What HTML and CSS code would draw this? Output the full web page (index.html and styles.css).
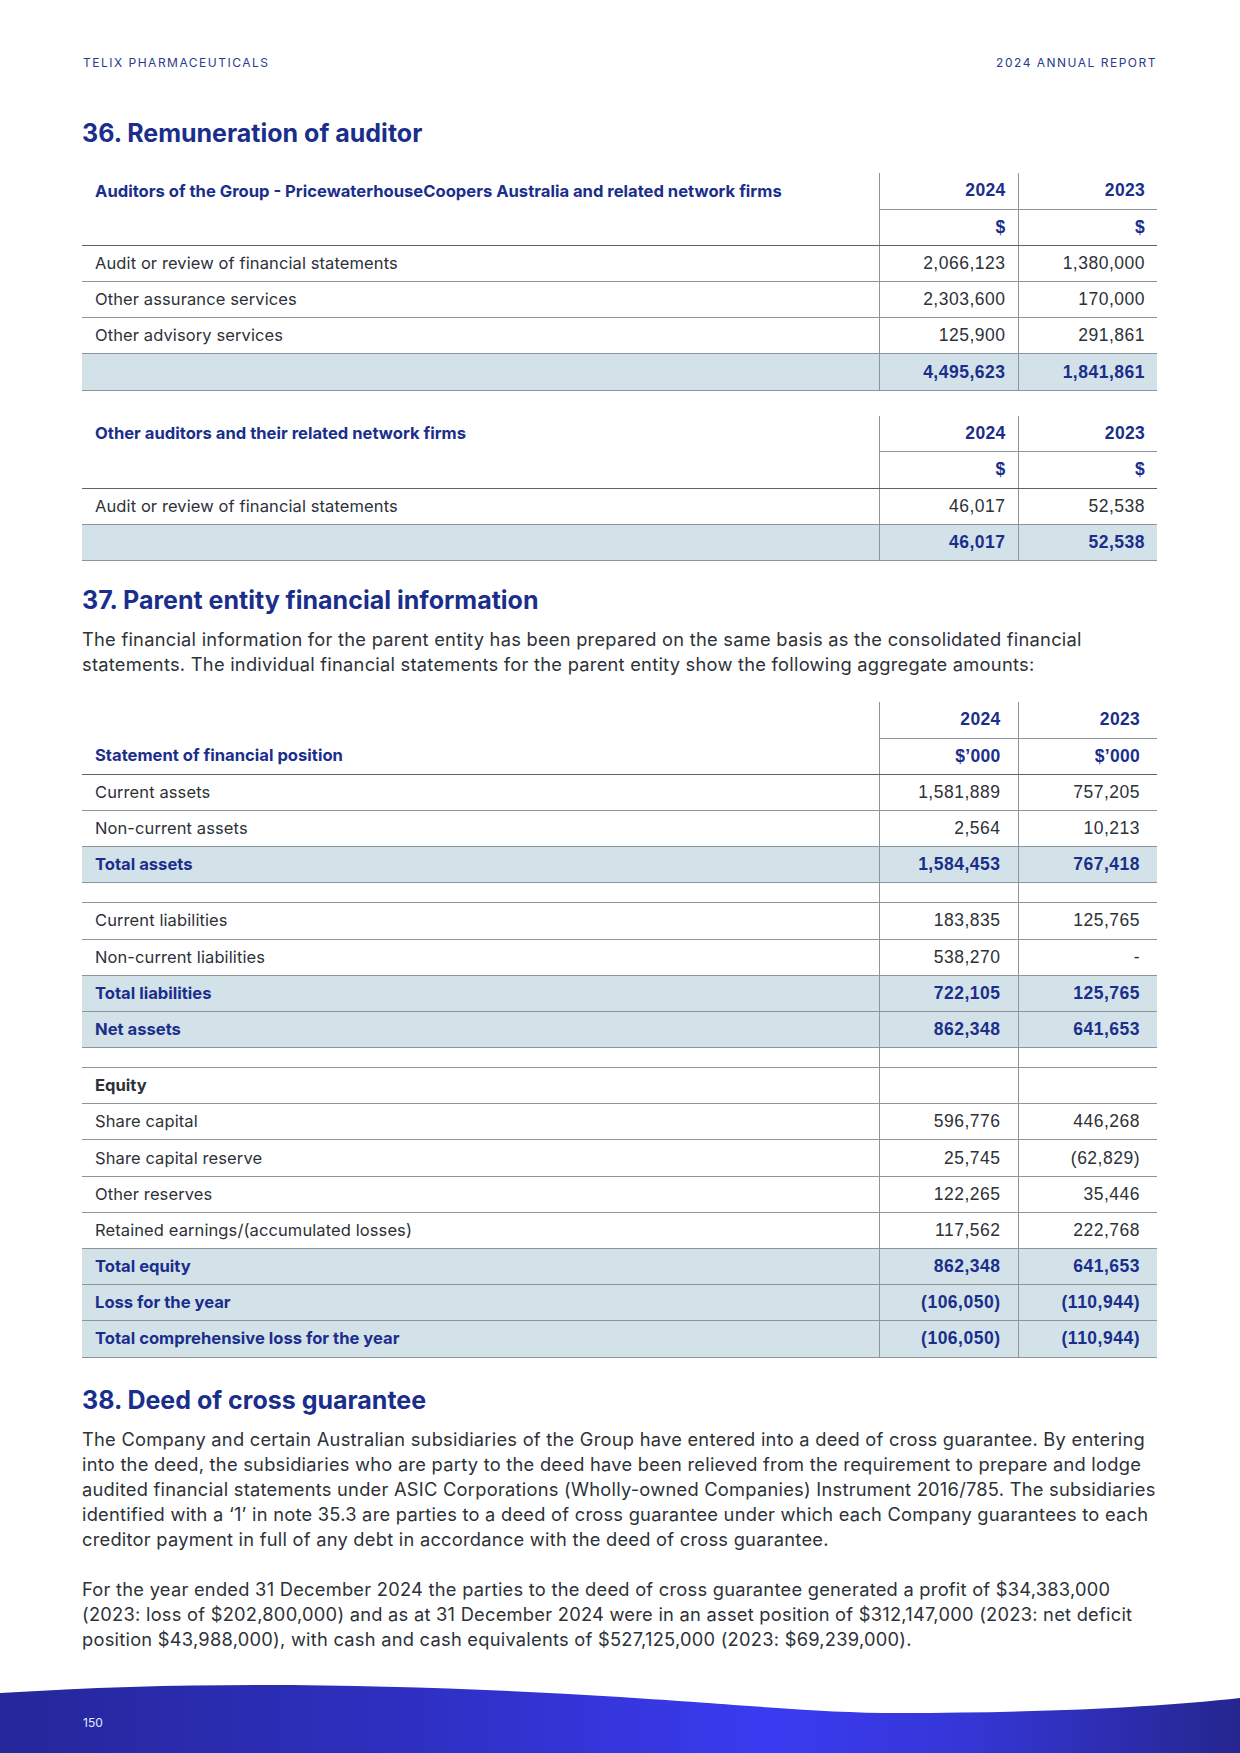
FILE: index.html
```html
<!DOCTYPE html>
<html lang="en">
<head>
<meta charset="utf-8">
<title>Telix Pharmaceuticals – 2024 Annual Report – page 150</title>
<link rel="stylesheet" href="styles.css">
</head>
<body>
<div class="page">
  <header class="running-head">
    <span>TELIX PHARMACEUTICALS</span>
    <span>2024 ANNUAL REPORT</span>
  </header>

  <main class="content">
    <h2 class="note-title first">36. Remuneration of auditor</h2>

    <table class="fin">
      <colgroup><col><col class="num-col"><col class="num-col"></colgroup>
      <tr class="head1">
        <td class="label hd">Auditors of the Group - PricewaterhouseCoopers Australia and related network firms</td>
        <td class="num hd">2024</td>
        <td class="num hd">2023</td>
      </tr>
      <tr class="head2">
        <td class="label"></td>
        <td class="num hd">$</td>
        <td class="num hd">$</td>
      </tr>
      <tr><td class="label">Audit or review of financial statements</td><td class="num">2,066,123</td><td class="num">1,380,000</td></tr>
      <tr><td class="label">Other assurance services</td><td class="num">2,303,600</td><td class="num">170,000</td></tr>
      <tr><td class="label">Other advisory services</td><td class="num">125,900</td><td class="num">291,861</td></tr>
      <tr class="total"><td class="label"></td><td class="num">4,495,623</td><td class="num">1,841,861</td></tr>
    </table>

    <table class="fin gap">
      <colgroup><col><col class="num-col"><col class="num-col"></colgroup>
      <tr class="head1">
        <td class="label hd">Other auditors and their related network firms</td>
        <td class="num hd">2024</td>
        <td class="num hd">2023</td>
      </tr>
      <tr class="head2">
        <td class="label"></td>
        <td class="num hd">$</td>
        <td class="num hd">$</td>
      </tr>
      <tr><td class="label">Audit or review of financial statements</td><td class="num">46,017</td><td class="num">52,538</td></tr>
      <tr class="total"><td class="label"></td><td class="num">46,017</td><td class="num">52,538</td></tr>
    </table>

    <h2 class="note-title">37. Parent entity financial information</h2>
    <p class="body-text">The financial information for the parent entity has been prepared on the same basis as the consolidated financial statements. The individual financial statements for the parent entity show the following aggregate amounts:</p>

    <table class="fin wide-pad gap-sm">
      <colgroup><col><col class="num-col"><col class="num-col"></colgroup>
      <tr class="head1">
        <td class="label"></td>
        <td class="num hd">2024</td>
        <td class="num hd">2023</td>
      </tr>
      <tr class="head2">
        <td class="label hd">Statement of financial position</td>
        <td class="num hd">$’000</td>
        <td class="num hd">$’000</td>
      </tr>
      <tr><td class="label">Current assets</td><td class="num">1,581,889</td><td class="num">757,205</td></tr>
      <tr><td class="label">Non-current assets</td><td class="num">2,564</td><td class="num">10,213</td></tr>
      <tr class="total"><td class="label">Total assets</td><td class="num">1,584,453</td><td class="num">767,418</td></tr>
      <tr class="spacer"><td class="label"></td><td class="num"></td><td class="num"></td></tr>
      <tr><td class="label">Current liabilities</td><td class="num">183,835</td><td class="num">125,765</td></tr>
      <tr><td class="label">Non-current liabilities</td><td class="num">538,270</td><td class="num">-</td></tr>
      <tr class="total"><td class="label">Total liabilities</td><td class="num">722,105</td><td class="num">125,765</td></tr>
      <tr class="total"><td class="label">Net assets</td><td class="num">862,348</td><td class="num">641,653</td></tr>
      <tr class="spacer"><td class="label"></td><td class="num"></td><td class="num"></td></tr>
      <tr class="subhead"><td class="label">Equity</td><td class="num"></td><td class="num"></td></tr>
      <tr><td class="label">Share capital</td><td class="num">596,776</td><td class="num">446,268</td></tr>
      <tr><td class="label">Share capital reserve</td><td class="num">25,745</td><td class="num">(62,829)</td></tr>
      <tr><td class="label">Other reserves</td><td class="num">122,265</td><td class="num">35,446</td></tr>
      <tr><td class="label">Retained earnings/(accumulated losses)</td><td class="num">117,562</td><td class="num">222,768</td></tr>
      <tr class="total"><td class="label">Total equity</td><td class="num">862,348</td><td class="num">641,653</td></tr>
      <tr class="total"><td class="label">Loss for the year</td><td class="num">(106,050)</td><td class="num">(110,944)</td></tr>
      <tr class="total"><td class="label">Total comprehensive loss for the year</td><td class="num">(106,050)</td><td class="num">(110,944)</td></tr>
    </table>

    <h2 class="note-title after-table">38. Deed of cross guarantee</h2>
    <p class="body-text">The Company and certain Australian subsidiaries of the Group have entered into a deed of cross guarantee. By entering into the deed, the subsidiaries who are party to the deed have been relieved from the requirement to prepare and lodge audited financial statements under ASIC Corporations (Wholly-owned Companies) Instrument 2016/785. The subsidiaries identified with a ‘1’ in note 35.3 are parties to a deed of cross guarantee under which each Company guarantees to each creditor payment in full of any debt in accordance with the deed of cross guarantee.</p>
    <p class="body-text para-gap">For the year ended 31 December 2024 the parties to the deed of cross guarantee generated a profit of $34,383,000 (2023: loss of $202,800,000) and as at 31 December 2024 were in an asset position of $312,147,000 (2023: net deficit position $43,988,000), with cash and cash equivalents of $527,125,000 (2023: $69,239,000).</p>
  </main>

  <footer class="page-foot">
    <svg class="wave" viewBox="0 0 1240 70" preserveAspectRatio="none" aria-hidden="true">
      <defs>
        <linearGradient id="footGrad" x1="0" y1="0" x2="1" y2="0">
          <stop offset="0" stop-color="#25279a"/>
          <stop offset="0.35" stop-color="#2f30c4"/>
          <stop offset="0.62" stop-color="#3a3bf1"/>
          <stop offset="0.78" stop-color="#3536d6"/>
          <stop offset="1" stop-color="#25268f"/>
        </linearGradient>
      </defs>
      <path d="M0,10 C220,-4 420,2 620,14 C760,23 820,30 900,30 C1040,30 1160,24 1240,15 L1240,70 L0,70 Z" fill="url(#footGrad)"/>
    </svg>
    <span class="page-num">150</span>
  </footer>
</div>
</body>
</html>
```

FILE: styles.css
```css
html, body {
  margin: 0;
  padding: 0;
  background: #ffffff;
}

.page {
  width: 1240px;
  min-height: 1753px;
  display: flex;
  flex-direction: column;
  font-family: Inter, "Noto Sans", "Liberation Sans", sans-serif;
  color: #2d3238;
}

.running-head {
  display: flex;
  justify-content: space-between;
  padding: 55px 83px 0 83px;
  font-size: 12px;
  line-height: 15px;
  letter-spacing: 1.5px;
  color: #2a3a8f;
}

.content {
  padding: 0 83px 0 82px;
}

.note-title {
  margin: 24px 0 0 0;
  font-size: 25px;
  line-height: 30px;
  font-weight: 700;
  color: #1a2e8c;
  letter-spacing: 0;
}

.note-title.first {
  margin-top: 48px;
}

.note-title.after-table {
  margin-top: 27px;
}

.note-title + .fin {
  margin-top: 25px;
}

.body-text {
  margin: 12.5px 0 0 0;
  font-size: 18.3px;
  line-height: 25px;
  letter-spacing: 0.25px;
  color: #2d3238;
}

.body-text.para-gap {
  margin-top: 25px;
}

.fin {
  width: 100%;
  border-collapse: collapse;
  border-spacing: 0;
  table-layout: fixed;
}

.fin.gap {
  margin-top: 25px;
}

.fin.gap-sm {
  margin-top: 24.5px;
}

.fin .num-col {
  width: 139px;
}

.fin tr {
  height: 36.2px;
}

.fin td {
  padding: 0 12px 0 13px;
  line-height: 21px;
  font-size: 16.5px;
  letter-spacing: 0.1px;
  border-bottom: 1px solid #8d949a;
  vertical-align: middle;
  white-space: nowrap;
}

.fin td.num {
  border-left: 1px solid #8d949a;
  text-align: right;
  font-family: "Liberation Sans", Arial, sans-serif;
  font-size: 17.5px;
  letter-spacing: 0.5px;
  padding-right: 12px;
  color: #2d3238;
}

.fin.wide-pad td.num {
  padding-right: 17px;
}

.fin .hd {
  font-weight: 700;
  color: #1a2e8c;
}

.fin td.num.hd {
  color: #1a2e8c;
  letter-spacing: 0.3px;
}

.fin .label.hd {
  font-size: 16.6px;
  letter-spacing: 0;
}

.fin tr.head1 td.label {
  border-bottom: none;
}

.fin tr.head2 td {
  border-bottom: 1px solid #5c636a;
}

.fin tr.total td {
  background: #d3e2e8;
  font-weight: 700;
  color: #1a2e8c;
}

.fin tr.total td.num {
  color: #1a2e8c;
}

.fin tr.total td.label {
  font-size: 16.6px;
  letter-spacing: 0;
}

.fin tr.spacer {
  height: 20px;
}

.fin tr.spacer td {
  padding: 0;
  line-height: 0;
}

.fin tr.subhead td.label {
  font-weight: 700;
  font-size: 16.6px;
  letter-spacing: 0;
  color: #2d3238;
}

.page-foot {
  margin-top: auto;
  position: relative;
  height: 70px;
  display: flex;
  align-items: flex-end;
  padding: 0 0 0 83px;
  box-sizing: border-box;
}

.wave {
  position: absolute;
  left: 0;
  top: 0;
  width: 1240px;
  height: 70px;
  display: block;
}

.page-num {
  position: relative;
  font-size: 12px;
  line-height: 15px;
  color: #e6e8ff;
  margin-bottom: 23px;
}
```
